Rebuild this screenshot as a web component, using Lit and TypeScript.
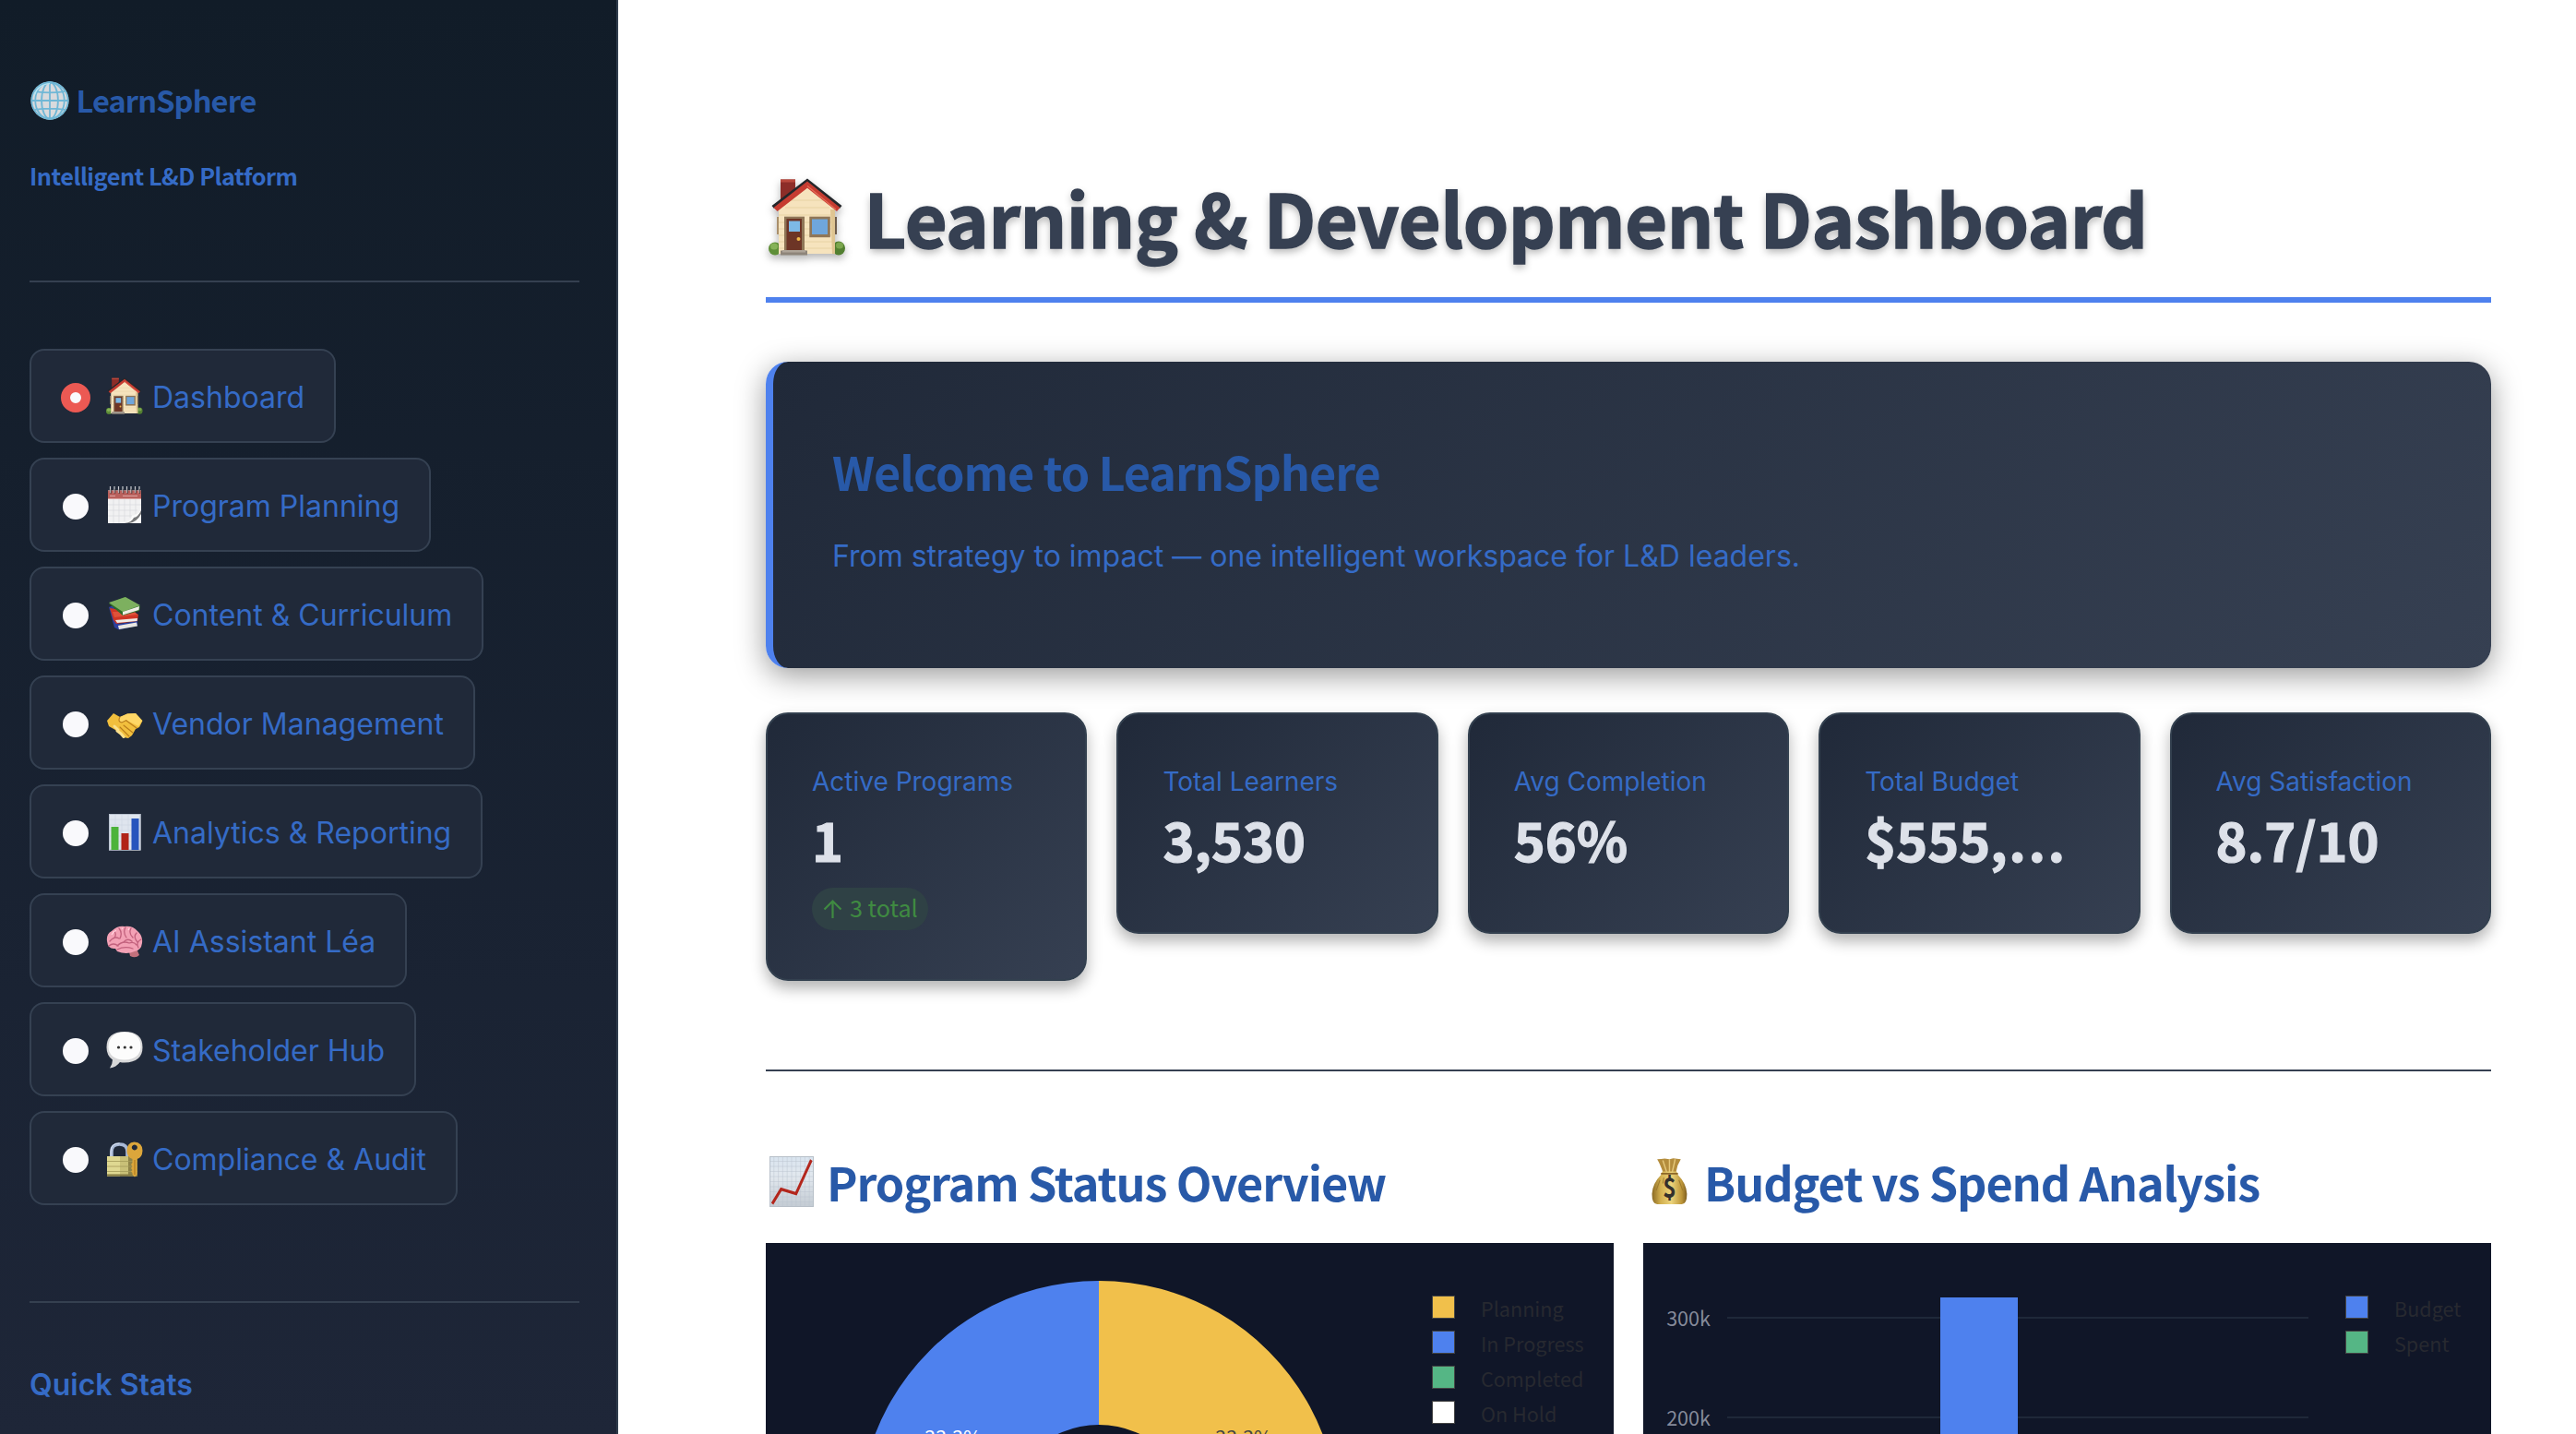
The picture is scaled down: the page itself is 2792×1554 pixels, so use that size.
import { LitElement, html, css, svg, nothing } from "lit";
import { customElement, property } from "lit/decorators.js";

const ICONS: Record<string, unknown> = {
  house: svg`
    <g transform="scale(.4762)">
      <ellipse cx="7" cy="76.500" rx="7" ry="7" fill="#5f8f38"/>
      <ellipse cx="76" cy="76" rx="7" ry="7.500" fill="#527f30"/>
      <ellipse cx="6" cy="74" rx="4" ry="3.500" fill="#86b257"/>
      <ellipse cx="77" cy="73" rx="4" ry="3.500" fill="#7ba64e"/>
      <rect x="13" y="1.500" width="16" height="24" fill="#8d2d28"/>
      <rect x="13" y="1.500" width="16" height="3" fill="#b9483c"/>
      <path d="M11 32 42 7 72 32V82H11Z" fill="#f6e3bd"/>
      <path d="M11 48H72M11 55H72M11 62H72M11 69H72M24 24H60M18 32H66M11 40H72M11 76H72" stroke="#e6cf9f" stroke-width=".8"/>
      <path d="M67 34H72V82H69Z" fill="#dfc592"/>
      <rect x="9" y="42" width="2" height="19" fill="#a98f6c"/>
      <rect x="72" y="42" width="2" height="19" fill="#6e5c4b"/>
      <path d="M42 0.500 79.500 30 77 33 42 5 6 33 3.500 30Z" fill="#24262a"/>
      <path d="M42 3.500 77.500 32 74 36 42 10.700 9.500 36 5.500 32Z" fill="#c63c31"/>
      <path d="M42 8.500 73 34" stroke="#e56a55" stroke-width="1.200" fill="none"/>
      <rect x="17" y="41.700" width="22" height="37" fill="#8f7657"/>
      <rect x="19.500" y="44" width="16.500" height="34.500" fill="#6d3526"/>
      <rect x="22" y="46.500" width="12" height="11.500" fill="#7db9e6"/>
      <circle cx="32.500" cy="66" r="2" fill="#f0b849"/>
      <rect x="13" y="78.500" width="29" height="5" fill="#8e857a"/>
      <rect x="15" y="78" width="25" height="2.500" fill="#ada498"/>
      <rect x="44.300" y="41.700" width="22.500" height="22.500" fill="#8f7657"/>
      <rect x="47" y="44.500" width="17" height="16.500" fill="#6fa6dc"/>
    </g>`,
  calendar: svg`
    <rect x="2" y="4.500" width="36" height="35.500" fill="#f1f1f2"/>
    <rect x="2" y="4.500" width="36" height="8.500" fill="#b9605c"/>
    <path d="M2 13.500H38M4 10.500H10M18 10.500H34" stroke="#dba3a0" stroke-width="1"/>
    <path d="M2 20H38M2 26H34M2 32H28M8 14V40M14 14V40M20 14V38M26 14V34M32 14V30" stroke="#d9dade" stroke-width=".7"/>
    <path d="M20 40Q27 38 28 32Q34 31 38 26V40Z" fill="#fbfbfb"/>
    <path d="M20 40Q28 39 30 34Q35 33 38 26V30Q33 39 25 40Z" fill="#77787a"/>
    <path d="M4.500 0V7M9 0V7M13.500 0V7M18 0V7M22.500 0V7M27 0V7M31.500 0V7M36 0V7" stroke="#c9cbd0" stroke-width="1.200"/>
    <path d="M5.300 3V8M9.800 3V8M14.300 3V8M18.800 3V8M23.300 3V8M27.800 3V8M32.300 3V8M36.600 3V8" stroke="#3b3335" stroke-width=".8"/>`,
  books: svg`
    <path d="M3 13 8 11 14 31 34 28 34 33 14 37.500 9 35Z" fill="#2d3f9e"/>
    <path d="M13 33 33 29.500 34 33.500 14 37Z" fill="#e8e6e1"/>
    <path d="M4 14 29 18 35 21 34 28 11 31 8 27Z" fill="#cf3626"/>
    <path d="M10 27 34 25 33.500 28 12 30Z" fill="#f0ece5"/>
    <path d="M7 18 31 18 34 21 9 24Z" fill="#e0513a"/>
    <path d="M3 9 20 2 37 12 36 17 18 22Z" fill="#2e6d28"/>
    <path d="M3 8 21 2 37 11 18 18Z" fill="#7db05f"/>
    <path d="M18 18 36 12 35.500 16 18 21.500Z" fill="#efeee6"/>`,
  handshake: svg`
    <path d="M1 18 8 10 15 14 23 10.500 32 10 39.500 18 36 25 32 27 28 34 24 37 19 36 10 28 3 24Z" fill="#f2bf3d"/>
    <path d="M15 14 23 10.500 32 10 39 18 35 24 22 17.500 17 20Q13 19 15 14Z" fill="#ffd766"/>
    <path d="M22 18 33 26M19 23 29 31M15 25 25 35M15 14Q12 19 17 20L22 17.500" stroke="#b97c1c" stroke-width="1.100" fill="none" stroke-linecap="round"/>
    <path d="M9 24 13 28M12 29 16 32M16 32 19 35.500" stroke="#fbe08c" stroke-width="3" stroke-linecap="round"/>`,
  bars: svg`
    <rect x="3" y="1" width="34.500" height="39.500" fill="#dfe5ee"/>
    <rect x="3.500" y="1.500" width="33.500" height="38.500" fill="none" stroke="#b9c2cf"/>
    <path d="M4 7H37M4 13H37M4 19H37M4 25H37M4 31H37M10 2V40M17 2V40M24 2V40" stroke="#cdd5e0" stroke-width=".6"/>
    <rect x="5.500" y="15" width="8" height="25" fill="#4cb33a"/>
    <rect x="16.500" y="22" width="8" height="18" fill="#b12318"/>
    <rect x="27.500" y="6" width="8" height="34" fill="#2755bd"/>`,
  brain: svg`
    <path d="M24 28 32 27 36 36Q32 40 26 37Z" fill="#c2707c"/>
    <path d="M10 29Q2 30 1 21Q0 13 6 10Q12 4 20 5Q29 4 34 10Q40 15 39 23Q38 31 31 32Q22 36 12 32Z" fill="#f3a1b5"/>
    <path d="M4 21Q9 15 14 18M9 10Q12 15 8 18M14 7Q18 12 15 18M21 6Q18 11 22 17M27 7Q24 12 29 17M33 12Q29 16 34 22M38 19Q32 22 35 28M12 26Q18 20 25 23Q30 21 33 25M12 30Q20 26 29 29M3 26Q8 22 13 26M19 22Q23 17 28 21" stroke="#c2617d" stroke-width="1.300" fill="none" stroke-linecap="round"/>
    <path d="M6 14Q8 10 11 9M17 8 18 6.500M24 9 25 7" stroke="#ffd3de" stroke-width="1.200" fill="none"/>`,
  bubble: svg`
    <path d="M20 1Q39.500 1 39.500 18Q39.500 34 20 34.500Q17 34.500 15 34Q11 39.500 4 40.500Q7 36 7 31.500Q.5 27 .5 18Q.5 1 20 1Z" fill="#d7d7d8"/>
    <path d="M20 1.500Q37.500 2 37.500 17.500Q37 31 20 31.500Q3 31 2.500 17.500Q3 2 20 1.500Z" fill="#fcfcfc"/>
    <circle cx="13.500" cy="18" r="1.600" fill="#333"/><circle cx="20.300" cy="18" r="1.600" fill="#333"/><circle cx="27" cy="18" r="1.600" fill="#333"/>`,
  lock: svg`
    <path d="M6 19V13Q6 5 14.500 5Q23 5 23 13V19" fill="none" stroke="#a9b9d6" stroke-width="3.600"/>
    <path d="M5 18V13Q5 4 14.500 4" fill="none" stroke="#dfe8f8" stroke-width="1"/>
    <rect x="1" y="18" width="33" height="21.500" fill="#c9c077"/>
    <rect x="1" y="18" width="14" height="21.500" fill="#dfd891"/>
    <rect x="24" y="18" width="10" height="21.500" fill="#8f8448"/>
    <path d="M1 23.500H34M1 29H34M1 34.500H34" stroke="#a39a58" stroke-width=".8"/>
    <rect x="1" y="37.500" width="33" height="2" fill="#857b42"/>
    <path d="M30.500 2.500Q39.500 3 39.500 12Q39 20 33.500 21V38L31 40.500 28.500 38V36L27 34.500 28.500 33 27 31 28.500 29 27 27 28.500 25V21Q22.500 19 22.500 12Q22.500 3 30.500 2.500ZM30.800 5.500A3 3 0 1 0 30.900 5.500Z" fill="#dca63b" fill-rule="evenodd"/>
    <path d="M31 22V38" stroke="#a8741d" stroke-width="1"/>`,
  globe: svg`
    <circle cx="20" cy="20" r="19.500" fill="#d9dadd"/>
    <g fill="none" stroke="#6fb7d6" stroke-width="1.700">
      <circle cx="20" cy="20" r="18.800"/>
      <ellipse cx="20" cy="20" rx="8.500" ry="18.800"/>
      <ellipse cx="20" cy="20" rx="15" ry="18.800"/>
      <path d="M20 1V39M1 20H39M4.500 10.500Q20 13 35.500 10.500M4.500 29.500Q20 27 35.500 29.500"/>
    </g>
    <path d="M4 14A17 17 0 0 1 20 2.500" fill="none" stroke="#b5e4f3" stroke-width="1.300"/>`,
  trend: svg`
    <defs>
      <linearGradient id="paper" x1="0" y1="0" x2="0" y2="1"><stop offset="0" stop-color="#d9e4ef"/><stop offset=".4" stop-color="#e2e8ee"/><stop offset="1" stop-color="#c3cbd3"/></linearGradient>
    </defs>
    <rect width="40" height="40" fill="url(#paper)"/>
    <path d="M0 4H40M0 8H40M0 12H40M0 16H40M0 20H40M0 24H40M0 28H40M0 32H40M0 36H40M4 0V40M8 0V40M12 0V40M16 0V40M20 0V40M24 0V40M28 0V40M32 0V40M36 0V40" stroke="#b9c3ce" stroke-width=".35"/>
    <path d="M.4 .4H39.600V39.600H.4Z" fill="none" stroke="#b7bfc8" stroke-width=".8"/>
    <path d="M2.500 37.500 10.500 26 24 29.500 37.800 3" fill="none" stroke="#b3261c" stroke-width="2.400"/>`,
  bag: svg`
    <defs>
      <linearGradient id="sack" x1="0" x2="1"><stop offset="0" stop-color="#8a6a24"/><stop offset=".25" stop-color="#d3b04f"/><stop offset=".55" stop-color="#ecd47c"/><stop offset=".85" stop-color="#bd9639"/><stop offset="1" stop-color="#7d5d20"/></linearGradient>
    </defs>
    <path d="M11 12Q8 5 5 1L9 .8 13 .3 18 1 22 .2 26 .6 30 1Q26 6 25 12Z" fill="#b48d3d"/>
    <path d="M11 2 15 12M18 1V12M24 1 21 12" stroke="#e6c87a" stroke-width="1.400"/>
    <path d="M10.500 11.500H25.500L27 14.500Q36 22 36.500 31Q36.500 40 31 40H5Q-.5 40 -.5 31Q0 22 9 14.500Z" fill="url(#sack)"/>
    <path d="M9 13.500H27" stroke="#8c6729" stroke-width="1.400"/>
    <path d="M8 19 4 28M28 19 32 28M12 17 11 22" stroke="#9c7a2e" stroke-width="1" fill="none"/>
    <text x="18" y="34.800" text-anchor="middle" font-family="Noto Sans CJK SC, sans-serif" font-weight="700" font-size="24" fill="#34302b">$</text>`,
};

@customElement("emoji-icon")
class EmojiIcon extends LitElement {
  @property() name = "house";
  static styles = css`
    :host { display: block; width: 40px; height: 40px; flex: none; }
    svg { display: block; width: 100%; height: 100%; overflow: visible; }
  `;
  render() {
    return html`<svg viewBox="0 0 40 40" preserveAspectRatio="none">${ICONS[this.name]}</svg>`;
  }
}

const NAV = [
  { icon: "house", label: "Dashboard", width: 332 },
  { icon: "calendar", label: "Program Planning", width: 435 },
  { icon: "books", label: "Content & Curriculum", width: 492 },
  { icon: "handshake", label: "Vendor Management", width: 483 },
  { icon: "bars", label: "Analytics & Reporting", width: 491 },
  { icon: "brain", label: "AI Assistant Léa", width: 409 },
  { icon: "bubble", label: "Stakeholder Hub", width: 419 },
  { icon: "lock", label: "Compliance & Audit", width: 464 },
];

const METRICS = [
  { label: "Active Programs", value: "1", delta: "3 total" },
  { label: "Total Learners", value: "3,530" },
  { label: "Avg Completion", value: "56%" },
  { label: "Total Budget", value: "$555,", clipped: true },
  { label: "Avg Satisfaction", value: "8.7/10" },
];

const STATUS = [
  { label: "Planning", color: "#f1c04b" },
  { label: "In Progress", color: "#4e81ee" },
  { label: "Completed", color: "#55b685" },
  { label: "On Hold", color: "#ffffff" },
];

const SERIES = [
  { label: "Budget", color: "#4e81ee" },
  { label: "Spent", color: "#55b685" },
];

@customElement("app-root")
class AppRoot extends LitElement {
  static styles = css`
    :host {
      display: flex;
      width: 2792px;
      height: 1554px;
      overflow: hidden;
      background: #fff;
      font-family: Inter, sans-serif;
      color: #356bc6;
    }
    * { box-sizing: border-box; margin: 0; }
    .display { font-family: "Noto Sans CJK SC", sans-serif; font-weight: 700; }
    .sidebar {
      flex: none;
      width: 670px;
      height: 1554px;
      padding: 86px 40px 0 32px;
      border-right: 2px solid #303d4d;
      background: linear-gradient(180deg, #111c28, #1e2638);
    }
    .brand { display: flex; align-items: center; height: 44px; }
    .brand emoji-icon { width: 42px; height: 42px; margin: 1px 7.500px 0 1px; }
    .brand-name { font-size: 32.600px; line-height: 44px; letter-spacing: -0.900px; color: #2859a8; white-space: nowrap; }
    .tagline { margin-top: 43.500px; font-size: 25.300px; line-height: 32px; letter-spacing: -0.500px; white-space: nowrap; }
    .rule { height: 2px; background: #354050; }
    .rule-top { margin-top: 98.500px; }
    .rule-low { margin-top: 104px; }
    .nav { display: flex; flex-direction: column; gap: 16px; margin-top: 72px; }
    .item {
      display: flex;
      align-items: center;
      height: 102px;
      padding-left: 32px;
      border: 2px solid #354152;
      border-radius: 16px;
      background: #202939;
    }
    .radio {
      width: 28px;
      height: 28px;
      margin: 4px 19px 0 2px;
      border-radius: 50%;
      background: #f9f9fc;
      flex: none;
    }
    .radio.on { width: 32px; height: 32px; margin: 4px 17px 0 0; border: 10px solid #ec5953; }
    .item-label { margin: 3px 0 0 10px; font-size: 32px; line-height: 48px; white-space: nowrap; }
    .quick { margin-top: 69px; font-size: 32px; line-height: 40px; font-weight: 600; }
    .main { flex: 1; min-width: 0; padding: 185px 92px 0 160px; }
    .title {
      display: flex;
      height: 143px;
      border-bottom: 6px solid #4e81ee;
      color: #364052;
    }
    .title emoji-icon { width: 84px; height: 84px; margin: 8px 19.500px 0 3px; filter: drop-shadow(0 4px 4px rgba(0, 0, 0, 0.3)); }
    .title-text {
      margin-top: 2px;
      font-size: 79.200px;
      line-height: 96px;
      letter-spacing: -0.450px;
      white-space: nowrap;
      -webkit-text-stroke: 1.400px #364052;
      text-shadow: 0 4px 8px rgba(0, 0, 0, 0.3);
    }
    .welcome {
      height: 332px;
      margin-top: 64px;
      padding: 87px 64px 0;
      border-left: 8px solid #4e81ee;
      border-radius: 24px;
      background: linear-gradient(135deg, #202939, #364052);
      box-shadow: 0 8px 32px rgba(0, 0, 0, 0.4);
    }
    .welcome-title { font-size: 50.400px; line-height: 64px; letter-spacing: -1.080px; color: #2859a8; white-space: nowrap; }
    .welcome-text { margin-top: 36px; font-size: 32px; line-height: 48px; white-space: nowrap; }
    .metrics { display: grid; grid-template-columns: repeat(5, 1fr); gap: 32px; align-items: start; height: 291px; margin-top: 48px; }
    .metric {
      min-width: 0;
      height: 240px;
      padding: 55px 48px 0;
      border: 2px solid #33404f;
      border-radius: 24px;
      background: linear-gradient(135deg, #202939, #364052);
      box-shadow: 0 8px 16px rgba(0, 0, 0, 0.3);
    }
    .metric.tall { height: 291px; }
    .metric-label { font-size: 28px; line-height: 36px; white-space: nowrap; }
    .metric-value {
      margin-top: 12px;
      font-size: 57.600px;
      line-height: 64px;
      color: #dde1e9;
      white-space: nowrap;
      -webkit-text-stroke: 1.200px #dde1e9;
    }
    .dots { margin-left: 1.500px; letter-spacing: 2.400px; }
    .delta {
      display: flex;
      align-items: center;
      width: 126px;
      height: 46px;
      margin-top: 21px;
      padding-left: 12px;
      border-radius: 23px;
      background: #2f4145;
      color: #3f8a41;
      font-family: "Noto Sans CJK SC", sans-serif;
      font-size: 25.200px;
      line-height: 42px;
      white-space: nowrap;
    }
    .delta svg { width: 21px; height: 22px; margin: 0 8px 1px 0; flex: none; }
    .delta span { height: 46px; }
    .rule-main { height: 2px; margin-top: 96px; background: #364052; }
    .charts { display: grid; grid-template-columns: 1fr 1fr; gap: 32px; margin-top: 86px; }
    .chart-title { display: flex; height: 64px; color: #2859a8; }
    .chart-title emoji-icon { width: 48px; height: 55px; margin: 6px 14px 0 4px; }
    .chart-title emoji-icon[name="bag"] { height: 50px; width: 41px; margin: 8px 15.500px 0 9.500px; }
    .chart-title-text { margin-top: 1.500px; font-size: 50.400px; line-height: 64px; letter-spacing: -1.100px; white-space: nowrap; }
    .plot { display: block; width: 919px; height: 400px; margin-top: 36px; background: #101628; font-family: "Noto Sans CJK SC", sans-serif; font-size: 21.600px; }
  `;

  private legend(items: { label: string; color: string }[], x: number, tx: number) {
    return items.map(
      (s, i) => svg`
        <rect x=${x + 0.5} y=${57.5 + i * 38} width="24" height="24" fill=${s.color} stroke="#444" stroke-width="1"/>
        <text x=${tx} y=${80 + i * 38} fill="#272930">${s.label}</text>`
    );
  }

  private donut() {
    return svg`
      <path d="M361 301V41A260 260 0 0 1 586.200 431Z" fill="#f1c04b"/>
      <path d="M361 301 135.800 431A260 260 0 0 1 361 41Z" fill="#4e81ee"/>
      <circle cx="361" cy="301" r="104" fill="#101628"/>
      <text x="203" y="218.500" text-anchor="middle" fill="#ffffff">33.3%</text>
      <text x="518" y="218.500" text-anchor="middle" fill="#444444">33.3%</text>
      ${this.legend(STATUS, 722, 775)}`;
  }

  private budget() {
    return svg`
      <rect x="91" y="80" width="630" height="2" fill="#1f2839"/>
      <rect x="91" y="188" width="630" height="2" fill="#1f2839"/>
      <rect x="322" y="59" width="84" height="341" fill="#4e81ee"/>
      <text x="73" y="90" text-anchor="end" fill="#858a9a">300k</text>
      <text x="73" y="198" text-anchor="end" fill="#858a9a">200k</text>
      ${this.legend(SERIES, 761, 814)}`;
  }

  render() {
    return html`
      <aside class="sidebar">
        <div class="brand">
          <emoji-icon name="globe"></emoji-icon>
          <div class="brand-name display">LearnSphere</div>
        </div>
        <div class="tagline display">Intelligent L&amp;D Platform</div>
        <div class="rule rule-top"></div>
        <nav class="nav">
          ${NAV.map(
            (n, i) => html`<div class="item" style="width:${n.width}px">
              <span class="radio ${i === 0 ? "on" : ""}"></span>
              <emoji-icon name=${n.icon}></emoji-icon>
              <span class="item-label">${n.label}</span>
            </div>`
          )}
        </nav>
        <div class="rule rule-low"></div>
        <div class="quick">Quick Stats</div>
      </aside>
      <main class="main">
        <header class="title">
          <emoji-icon name="house"></emoji-icon>
          <h1 class="title-text display">Learning &amp; Development Dashboard</h1>
        </header>
        <section class="welcome">
          <h2 class="welcome-title display">Welcome to LearnSphere</h2>
          <p class="welcome-text">From strategy to impact — one intelligent workspace for L&amp;D leaders.</p>
        </section>
        <section class="metrics">
          ${METRICS.map(
            (m) => html`<div class="metric ${m.delta ? "tall" : ""}">
              <div class="metric-label">${m.label}</div>
              <div class="metric-value display">${m.value}${m.clipped ? html`<span class="dots">...</span>` : nothing}</div>
              ${m.delta
                ? html`<div class="delta">
                    <svg viewBox="0 0 21 22" fill="none" stroke="#3f8a41" stroke-width="2.200"><path d="M10.500 21V2.500M1.500 11.500 10.500 2.500 19.500 11.500"/></svg>
                    <span>${m.delta}</span>
                  </div>`
                : nothing}
            </div>`
          )}
        </section>
        <div class="rule-main"></div>
        <section class="charts">
          <div>
            <div class="chart-title">
              <emoji-icon name="trend"></emoji-icon>
              <h3 class="chart-title-text display">Program Status Overview</h3>
            </div>
            <svg class="plot" viewBox="0 0 919 400">${this.donut()}</svg>
          </div>
          <div>
            <div class="chart-title">
              <emoji-icon name="bag"></emoji-icon>
              <h3 class="chart-title-text display">Budget vs Spend Analysis</h3>
            </div>
            <svg class="plot" viewBox="0 0 919 400">${this.budget()}</svg>
          </div>
        </section>
      </main>
    `;
  }
}
